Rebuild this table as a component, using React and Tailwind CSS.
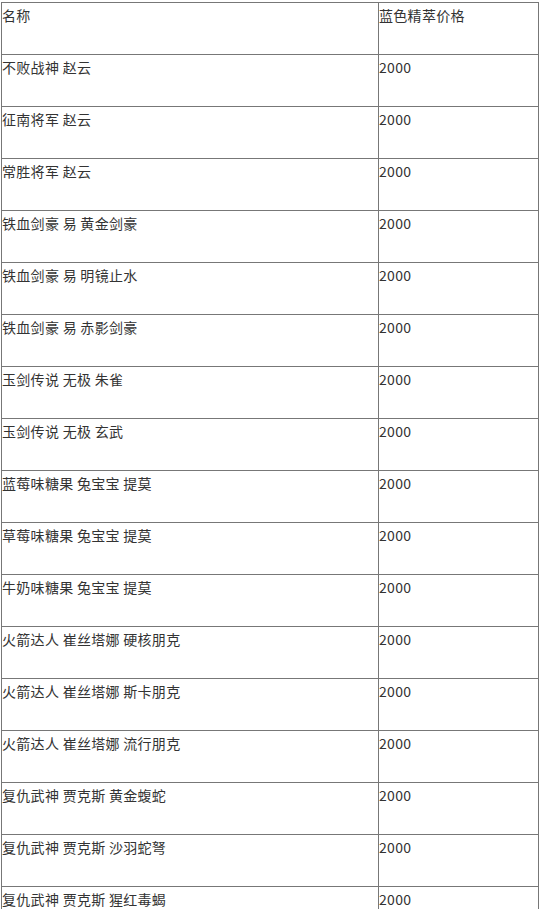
const rows = [
  '不败战神 赵云',
  '征南将军 赵云',
  '常胜将军 赵云',
  '铁血剑豪 易 黄金剑豪',
  '铁血剑豪 易 明镜止水',
  '铁血剑豪 易 赤影剑豪',
  '玉剑传说 无极 朱雀',
  '玉剑传说 无极 玄武',
  '蓝莓味糖果 兔宝宝 提莫',
  '草莓味糖果 兔宝宝 提莫',
  '牛奶味糖果 兔宝宝 提莫',
  '火箭达人 崔丝塔娜 硬核朋克',
  '火箭达人 崔丝塔娜 斯卡朋克',
  '火箭达人 崔丝塔娜 流行朋克',
  '复仇武神 贾克斯 黄金蝮蛇',
  '复仇武神 贾克斯 沙羽蛇弩',
  '复仇武神 贾克斯 猩红毒蝎',
]

export default function App() {
  return (
    <div className="h-[909px] overflow-hidden bg-white pt-[2px] pl-[1px] font-['Microsoft_YaHei','Noto_Sans_CJK_SC',sans-serif] text-[14px] tracking-[0.3px] text-[#333]">
      <table className="w-[538px] table-fixed border-collapse border border-[#333]">
        <colgroup>
          <col className="w-[377px]" />
          <col />
        </colgroup>
        <tbody>
          <tr className="h-[52px]">
            <td className="border border-[#777] align-top pt-[2px] leading-[20px]">名称</td>
            <td className="border border-[#777] align-top pt-[2px] leading-[20px]">蓝色精萃价格</td>
          </tr>
          {rows.map((name) => (
            <tr key={name} className="h-[52px]">
              <td className="border border-[#777] align-top pt-[2px] leading-[20px]">{name}</td>
              <td className="border border-[#777] align-top pt-[2px] leading-[20px]">2000</td>
            </tr>
          ))}
        </tbody>
      </table>
    </div>
  )
}
